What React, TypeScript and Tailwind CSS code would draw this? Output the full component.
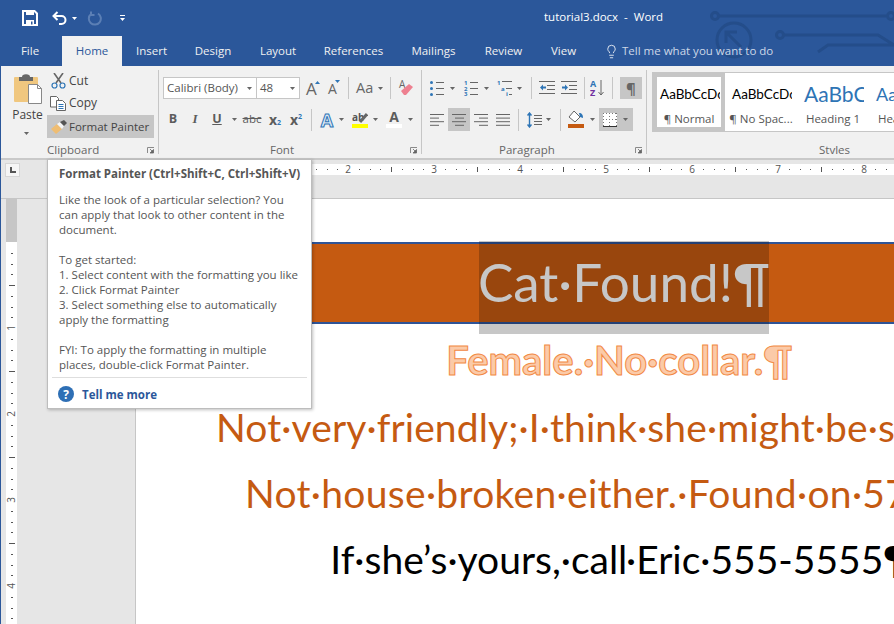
import { Lightbulb } from "lucide-react";

const tabs = [
  { label: "Insert", width: "w-[59px]" },
  { label: "Design", width: "w-[64px]" },
  { label: "Layout", width: "w-[66px]" },
  { label: "References", width: "w-[85px]" },
  { label: "Mailings", width: "w-[75px]" },
  { label: "Review", width: "w-[65px]" },
  { label: "View", width: "w-[55px]" },
];

const styleCards = [
  { sample: "AaBbCcDc", label: "¶ Normal", sampleClass: "text-[13.5px] text-black", selected: true },
  { sample: "AaBbCcDc", label: "¶ No Spac...", sampleClass: "text-[13.5px] text-black", selected: false },
  { sample: "AaBbCcDc", label: "Heading 1", sampleClass: "text-[21px] text-[#2e74b5]", selected: false },
  { sample: "AaBbCc", label: "Heading 2", sampleClass: "text-[18px] text-[#2e74b5]", selected: false },
];

function Caret({ className = "" }: { className?: string }) {
  return (
    <svg width="5" height="3" viewBox="0 0 5 3" className={`shrink-0 ${className}`}>
      <path d="M0 0h5L2.500 3z" fill="#666" />
    </svg>
  );
}

function Sep({ className = "" }: { className?: string }) {
  return <div className={`w-px h-[22px] bg-[#c6c6c6] shrink-0 ${className}`} />;
}

function Launcher() {
  return (
    <svg width="8" height="7" viewBox="0 0 8 7">
      <path d="M0.500 6V0.500H7" fill="none" stroke="#8a8a8a" />
      <path d="M3 2l3 3M6.500 2.500V6H3z" fill="#666" stroke="#666" strokeWidth="0.8" />
    </svg>
  );
}

function ListLines({ x = 6, w = 8, ys = [2, 8, 14] }: { x?: number; w?: number; ys?: number[] }) {
  return (
    <>
      {ys.map((y) => (
        <path key={y} d={`M${x} ${y + 0.5}h${w}`} stroke="#666" />
      ))}
    </>
  );
}

function AlignIcon({ rows }: { rows: [number, number][] }) {
  return (
    <svg width="15" height="12" viewBox="0 0 15 12" className="block">
      {rows.map(([x, w], i) => (
        <path key={i} d={`M${x} ${i * 3.6 + 0.5}h${w}`} stroke="#666" />
      ))}
    </svg>
  );
}

function Ruler() {
  const ticks = Array.from({ length: 71 }, (_, i) => i);
  return (
    <svg width="759" height="11" viewBox="0 0 759 11" className="block bg-white">
      {ticks.map((i) => {
        const x = 41 + i * 10.75;
        if (i % 8 === 0) {
          return (
            <text key={i} x={x} y="9" textAnchor="middle" className="fill-[#555] text-[10px]">
              {i / 8}
            </text>
          );
        }
        if (i % 4 === 0) return <rect key={i} x={Math.round(x)} y="3" width="1" height="5" fill="#555" />;
        return <rect key={i} x={Math.round(x)} y="5" width="1" height="1" fill="#555" />;
      })}
    </svg>
  );
}

function VerticalRuler() {
  const ticks = Array.from({ length: 37 }, (_, i) => i);
  return (
    <div className="w-[11px] ml-[5px]">
      <div className="h-[43px] bg-[#c6c6c6]" />
      <svg width="11" height="382" viewBox="0 0 11 382" className="block bg-white">
        {ticks.map((i) => {
          const y = i * 10.75;
          if (i % 8 === 0) {
            return (
              <text
                key={i}
                x="0"
                y="0"
                textAnchor="middle"
                transform={`translate(9 ${y}) rotate(-90)`}
                className="fill-[#555] text-[10px]"
              >
                {i === 0 ? "" : i / 8}
              </text>
            );
          }
          if (i % 4 === 0) return <rect key={i} x="3" y={Math.round(y)} width="6" height="1" fill="#555" />;
          return <rect key={i} x="5" y={Math.round(y)} width="2" height="1" fill="#555" />;
        })}
      </svg>
    </div>
  );
}

function TitleBar() {
  return (
    <header className="relative h-[66px] bg-[#2b579a] text-white overflow-hidden">
      {/* Circuit decoration in the corner */}
      <svg width="194" height="66" viewBox="0 0 194 66" className="absolute right-0 top-0" fill="none" stroke="#244d8a" strokeWidth="3">
        <circle cx="15" cy="16" r="3.500" />
        <path d="M19 16H186" />
        <circle cx="191" cy="16" r="3.500" />
        <circle cx="34" cy="40" r="17" />
        <path d="M27 33l14 14M26 43V32h11" />
        <circle cx="80" cy="35" r="3.500" />
        <path d="M84 35h94l16 10M118 52l10-7h66" />
      </svg>

      <div className="relative flex items-center h-[36px]">
        <svg width="16" height="16" viewBox="0 0 16 16" className="ml-[22px]">
          <path d="M1 1h11.500L15 3.500V15H1z" fill="none" stroke="#fff" strokeWidth="2" />
          <rect x="4" y="1" width="8" height="4" fill="#fff" />
          <rect x="4" y="10" width="8" height="5" fill="#fff" />
          <rect x="9" y="11.500" width="1.500" height="3" fill="#2b579a" />
        </svg>
        <svg width="15" height="14" viewBox="0 0 15 14" className="ml-[14px]">
          <path d="M5.500 1L1.500 5l4 4M2 5h7.500a4 4 0 0 1 0 8H7" fill="none" stroke="#fff" strokeWidth="2" />
        </svg>
        <Caret className="ml-[5px] [&>path]:fill-white" />
        <svg width="15" height="15" viewBox="0 0 15 15" className="ml-[10px]">
          <path d="M4 3a6 6 0 1 0 7-.5M4 .5V4h3.500" fill="none" stroke="#5b7fb5" strokeWidth="2" />
        </svg>
        <div className="ml-[18px] flex flex-col items-center gap-[2px]">
          <div className="w-[5px] h-px bg-white" />
          <Caret className="[&>path]:fill-white" />
        </div>
        <div className="absolute left-[544px] top-[9px] text-[11.5px] leading-[16px] whitespace-pre">tutorial3.docx  -  Word</div>
      </div>

      <nav className="relative flex h-[30px] text-[11.5px] text-[#f1f1f1]">
        <div className="w-[60px] flex items-center justify-center">File</div>
        <div className="ml-[2px] w-[60px] flex items-center justify-center bg-[#f1f1f1] text-[#2b579a]">Home</div>
        {tabs.map((tab) => (
          <div key={tab.label} className={`${tab.width} flex items-center justify-center`}>
            {tab.label}
          </div>
        ))}
        <div className="ml-[13px] flex items-center text-[#cdd8e8]">
          <Lightbulb size={15} strokeWidth={1.3} className="text-white" />
          <span className="ml-[3px]">Tell me what you want to do</span>
        </div>
      </nav>
    </header>
  );
}

function GroupLabel({ text, pad }: { text: string; pad: string }) {
  return (
    <div className={`h-[16px] -mb-[4px] flex items-center justify-between pr-[3px] text-[11.5px] text-[#666] ${pad}`}>
      <span>{text}</span>
      <Launcher />
    </div>
  );
}

function ClipboardGroup() {
  return (
    <section className="w-[158px] shrink-0 border-r border-[#c6c6c6] my-[4px] flex flex-col">
      <div className="flex flex-1">
        <div className="w-[46px] flex flex-col items-center">
          <svg width="30" height="30" viewBox="0 0 30 30" className="ml-[8px] mt-[4px]">
            <rect x="1" y="3" width="24" height="25" rx="1" fill="#f0c77f" />
            <path d="M6 7V3h3a3 2 0 0 1 8 0h3v4z" fill="#666" />
            <path d="M15.500 10.500h9l4 4v15h-13z" fill="#fff" stroke="#888" />
            <path d="M24.500 10.500v4h4" fill="none" stroke="#888" />
          </svg>
          <span className="ml-[7px] mt-[3px] text-[12px] leading-[16px] text-[#444]">Paste</span>
          <Caret className="ml-[5px] mt-[9px]" />
        </div>
        <div className="w-[107px] flex flex-col text-[12px] text-[#444]">
          <div className="h-[21px] flex items-center pl-[4px]">
            <svg width="15" height="16" viewBox="0 0 15 16">
              <path d="M3 0l7 10M12 0L5 10" stroke="#666" strokeWidth="1.600" />
              <circle cx="3.500" cy="12.500" r="2.500" fill="none" stroke="#2e75b6" strokeWidth="1.200" />
              <circle cx="11.500" cy="12.500" r="2.500" fill="none" stroke="#2e75b6" strokeWidth="1.200" />
            </svg>
            <span className="ml-[3px]">Cut</span>
          </div>
          <div className="h-[24px] flex items-center pl-[3px]">
            <svg width="16" height="15" viewBox="0 0 16 15">
              <path d="M.5.500h6l2 2V11H.500z" fill="#fff" stroke="#666" />
              <path d="M6.500 4.500h6l3 3v7h-9z" fill="#fff" stroke="#666" />
              <path d="M8.500 8.500h5M8.500 10.500h5M8.500 12.500h5" stroke="#2e75b6" />
            </svg>
            <span className="ml-[3px]">Copy</span>
          </div>
          <div className="h-[23px] flex items-center pl-[4px] bg-[#c6c6c6] text-[11.5px]">
            <svg width="16" height="14" viewBox="0 0 16 14">
              <path d="M0 9l6-5 5 5-6 5z" fill="#efbd72" />
              <path d="M6 4l3-2 4 4-2 3z" fill="#f5f5f5" />
              <path d="M9 2l4-2 3 3-3 3z" fill="#555" />
            </svg>
            <span className="ml-[2px]">Format Painter</span>
          </div>
        </div>
      </div>
      <GroupLabel text="Clipboard" pad="pl-[46px]" />
    </section>
  );
}

function FontGroup() {
  return (
    <section className="w-[263px] shrink-0 border-r border-[#c6c6c6] my-[4px] flex flex-col pl-[4px]">
      <div className="flex items-center h-[22px] mt-[7px]">
        <div className="w-[94px] h-[22px] bg-white border border-[#c6c6c6] flex items-center justify-between pl-[3px] pr-[4px] text-[11.5px] text-[#555]">
          <span>Calibri (Body)</span>
          <Caret />
        </div>
        <div className="w-[44px] h-[22px] bg-white border border-[#c6c6c6] -ml-px flex items-center justify-between pl-[3px] pr-[4px] text-[11.5px] text-[#555]">
          <span>48</span>
          <Caret />
        </div>
        <div className="relative ml-[6px] w-[14px] text-[17px] leading-none text-[#666]">
          A
          <svg width="5" height="3" viewBox="0 0 5 3" className="absolute right-0 top-[1px]"><path d="M0 3h5L2.500 0z" fill="#2e75b6" /></svg>
        </div>
        <div className="relative ml-[8px] w-[12px] text-[14px] leading-none text-[#666] mt-[2px]">
          A
          <svg width="5" height="3" viewBox="0 0 5 3" className="absolute right-0 -top-[2px]"><path d="M0 0h5L2.500 3z" fill="#2e75b6" /></svg>
        </div>
        <Sep className="ml-[8px]" />
        <span className="ml-[7px] w-[18px] text-[14.5px] text-[#666]">Aa</span>
        <Caret className="ml-[4px]" />
        <Sep className="ml-[7px]" />
        <svg width="16" height="16" viewBox="0 0 16 16" className="ml-[7px]">
          <text x="1" y="8" className="fill-[#666] text-[10px]">A</text>
          <path d="M3 11l8-7 4 3-7 8H6z" fill="#ee8090" />
        </svg>
      </div>
      <div className="flex items-center h-[23px] mt-[9px] text-[#5c5c5c]">
        <span className="w-[20px] text-center text-[12.5px] font-bold -mt-px">B</span>
        <span className="w-[24px] text-center text-[13px] italic font-['Liberation_Serif',serif] font-bold -mt-px">I</span>
        <span className="w-[20px] text-center text-[12.5px] font-bold underline -mt-px">U</span>
        <div className="w-[14px] flex justify-center"><Caret /></div>
        <span className="w-[22px] text-center text-[11.5px] line-through -mt-px">abc</span>
        <span className="w-[24px] text-center text-[14px] leading-none font-bold">
          x<span className="text-[7px] text-[#2e75b6]">2</span>
        </span>
        <span className="w-[18px] text-center text-[14px] leading-none font-bold">
          x<span className="text-[7px] text-[#2e75b6] align-[6px]">2</span>
        </span>
        <div className="w-[12px] flex justify-center"><Sep /></div>
        <div className="w-[20px] text-center text-[18px] leading-none font-bold text-[#dce8f5] [-webkit-text-stroke:1px_#2e75b6]">A</div>
        <div className="w-[8px] flex justify-center"><Caret /></div>
        <div className="ml-[7px] w-[16px] flex flex-col items-center">
          <svg width="16" height="11" viewBox="0 0 16 11" className="block">
            <text x="0" y="9" className="fill-[#555] text-[10px] font-bold">ab</text>
            <path d="M8 10l7-8" stroke="#666" strokeWidth="3" />
          </svg>
          <div className="w-[16px] h-[4px] bg-[#ffff00] mt-[1px]" />
        </div>
        <Caret className="ml-[5px]" />
        <div className="ml-[8px] w-[16px] flex flex-col items-center">
          <span className="text-[14px] leading-[12px] font-bold">A</span>
          <div className="w-[16px] h-[4px] bg-white mt-[1px]" />
        </div>
        <Caret className="ml-[6px]" />
      </div>
      <div className="flex-1" />
      <GroupLabel text="Font" pad="pl-[107px]" />
    </section>
  );
}

function ParagraphGroup() {
  return (
    <section className="w-[225px] shrink-0 border-r border-[#c6c6c6] my-[4px] flex flex-col">
      <div className="flex items-center h-[22px] mt-[7px]">
        <svg width="14" height="16" viewBox="0 0 14 16" className="ml-[8px]">
          <circle cx="1.500" cy="2.500" r="1.500" fill="#2e75b6" />
          <circle cx="1.500" cy="8.500" r="1.500" fill="#2e75b6" />
          <circle cx="1.500" cy="14.500" r="1.500" fill="#2e75b6" />
          <ListLines />
        </svg>
        <Caret className="ml-[6px]" />
        <svg width="14" height="16" viewBox="0 0 14 16" className="ml-[9px]">
          <text x="0" y="5" className="fill-[#2e75b6] text-[6px] font-bold">1</text>
          <text x="0" y="11" className="fill-[#2e75b6] text-[6px] font-bold">2</text>
          <text x="0" y="16" className="fill-[#2e75b6] text-[6px] font-bold">3</text>
          <ListLines />
        </svg>
        <Caret className="ml-[6px]" />
        <svg width="15" height="16" viewBox="0 0 15 16" className="ml-[8px]">
          <text x="0" y="5" className="fill-[#2e75b6] text-[6px] font-bold">1</text>
          <text x="4" y="11" className="fill-[#2e75b6] text-[6px] font-bold">a</text>
          <text x="9" y="16" className="fill-[#2e75b6] text-[6px] font-bold">i</text>
          <path d="M5 1.500h10M9 8.500h6M12 14.500h3" stroke="#666" />
        </svg>
        <Caret className="ml-[5px]" />
        <Sep className="ml-[9px]" />
        <svg width="16" height="14" viewBox="0 0 16 14" className="ml-[7px]">
          <path d="M0 .5h16M8 4.500h8M8 8.500h8M0 12.500h16" stroke="#666" />
          <path d="M1 6.500l3-3v2h3v2H4v2z" fill="#2e75b6" />
        </svg>
        <svg width="16" height="14" viewBox="0 0 16 14" className="ml-[6px]">
          <path d="M0 .5h16M8 4.500h8M8 8.500h8M0 12.500h16" stroke="#666" />
          <path d="M7 6.500l-3-3v2H1v2h3v2z" fill="#2e75b6" />
        </svg>
        <Sep className="ml-[7px]" />
        <svg width="15" height="18" viewBox="0 0 15 18" className="ml-[5px]">
          <text x="0" y="8" className="fill-[#2e75b6] text-[9px] font-bold">A</text>
          <text x="0" y="17" className="fill-[#7030a0] text-[9px] font-bold">Z</text>
          <path d="M11 1v15M8.500 13l2.500 3 2.500-3" fill="none" stroke="#666" />
        </svg>
        <Sep className="ml-[7px]" />
        <div className="ml-[7px] w-[22px] h-[22px] bg-[#c6c6c6] flex items-center justify-center text-[15px] font-bold text-[#666]">¶</div>
      </div>
      <div className="flex items-center h-[23px] mt-[9px]">
        <div className="ml-[8px]"><AlignIcon rows={[[0, 14], [0, 9], [0, 14], [0, 9]]} /></div>
        <div className="ml-[3px] w-[22px] h-[23px] bg-[#c6c6c6] flex items-center justify-center">
          <AlignIcon rows={[[0, 14], [3, 9], [0, 14], [3, 9]]} />
        </div>
        <div className="ml-[4px]"><AlignIcon rows={[[0, 14], [5, 9], [0, 14], [5, 9]]} /></div>
        <div className="ml-[7px]"><AlignIcon rows={[[0, 14], [0, 14], [0, 14], [0, 14]]} /></div>
        <Sep className="ml-[7px]" />
        <svg width="15" height="16" viewBox="0 0 15 16" className="ml-[8px]">
          <path d="M2.500 1v14M.5 3.500l2-2.500 2 2.500M.5 12.500l2 2.500 2-2.500" fill="none" stroke="#2e75b6" strokeWidth="1.400" />
          <path d="M7 3.500h8M7 6.500h8M7 9.500h8M7 12.500h8" stroke="#666" />
        </svg>
        <Caret className="ml-[4px]" />
        <Sep className="ml-[9px]" />
        <div className="ml-[7px] w-[16px] flex flex-col items-center">
          <svg width="16" height="12" viewBox="0 0 16 12" className="block">
            <path d="M6 0l6 6-5 5-6-5z" fill="#fff" stroke="#666" />
            <path d="M11 2c3 0 4 2 4 5l-3-1z" fill="#2e75b6" />
          </svg>
          <div className="w-[16px] h-[4px] bg-[#c55a11] mt-[1px]" />
        </div>
        <Caret className="ml-[6px]" />
        <div className="ml-[4px] w-[34px] h-[23px] bg-[#c6c6c6] flex items-center pl-[4px]">
          <svg width="14" height="14" viewBox="0 0 14 14">
            <rect width="14" height="14" fill="#fff" />
            <path d="M0 .5h14M0 6.500h14M6.500 0v14M13.500 0v14M.5 0v14" stroke="#777" strokeDasharray="1 2" />
            <path d="M0 13.500h14" stroke="#333" />
          </svg>
          <Caret className="ml-[6px]" />
        </div>
      </div>
      <div className="flex-1" />
      <GroupLabel text="Paragraph" pad="pl-[77px]" />
    </section>
  );
}

function StylesGroup() {
  return (
    <section className="flex-1 min-w-0 flex flex-col mt-[6px] mb-[4px] pl-[5px] overflow-hidden">
      <div className="flex h-[60px] w-[300px] bg-white border border-[#c6c6c6] shrink-0">
        {styleCards.map((card) => (
          <div
            key={card.label}
            className={`w-[72px] shrink-0 flex flex-col items-center overflow-hidden border-4 ${card.selected ? "border-[#c6c6c6]" : "border-white"}`}
          >
            <div className={`h-[34px] w-[62px] pl-[2px] overflow-hidden whitespace-nowrap flex items-center font-['Lato',sans-serif] ${card.sampleClass}`}>
              {card.sample}
            </div>
            <div className="text-[11.5px] leading-[16px] text-[#555] whitespace-nowrap">{card.label}</div>
          </div>
        ))}
      </div>
      <div className="h-[16px] mt-[10px] text-center text-[11.5px] leading-[16px] text-[#666] pl-[123px]">Styles</div>
    </section>
  );
}

function Tooltip() {
  return (
    <div className="absolute left-[47px] top-[159px] w-[265px] h-[250px] bg-white border border-[#bdbdbd] shadow-[1px_1px_3px_rgba(0,0,0,0.25)] text-[#555] text-[11.5px] leading-[15px]">
      <div className="px-[11px] whitespace-nowrap">
        <div className="mt-[6px] font-bold">Format Painter (Ctrl+Shift+C, Ctrl+Shift+V)</div>
        <div className="mt-[11px]">
          Like the look of a particular selection? You
          <br />
          can apply that look to other content in the
          <br />
          document.
          <br />
          <br />
          To get started:
          <br />
          1. Select content with the formatting you like
          <br />
          2. Click Format Painter
          <br />
          3. Select something else to automatically
          <br />
          apply the formatting
          <br />
          <br />
          FYI: To apply the formatting in multiple
          <br />
          places, double-click Format Painter.
        </div>
      </div>
      <div className="mx-[4px] mt-[5px] h-px bg-[#dedede]" />
      <div className="flex items-center pl-[10px] mt-[8px]">
        <div className="w-[16px] h-[16px] rounded-full bg-[#2e6fb5] text-white flex items-center justify-center text-[12px] font-bold">?</div>
        <span className="ml-[8px] font-bold text-[#2b579a]">Tell me more</span>
      </div>
    </div>
  );
}

function Doc() {
  return (
    <main className="w-[978px] shrink-0 bg-white border-l border-[#c6c6c6] font-['Lato',sans-serif] whitespace-nowrap text-center">
      <div className="mt-[43px] h-[82px] border-y-2 border-[#2f5496] bg-[#c55a11] flex justify-center">
        <div className="relative mr-[1px] w-[290px] pb-[4px] flex items-center justify-center text-white text-[53px] leading-none">
          Cat·Found!¶
          <div className="absolute left-0 right-0 -top-[3px] -bottom-[12px] bg-black/22" />
        </div>
      </div>
      <p className="mt-[14px] h-[44px] pr-[10px] text-[40px] leading-[44px] font-bold text-[#fbcaa8] [-webkit-text-stroke:1px_#f28a45]">Female.·No·collar.¶</p>
      <p className="mt-[12px] pl-[2px] text-[39px] tracking-[0.1px] leading-[66px] text-[#c55a11]">Not·very·friendly;·I·think·she·might·be·spayed.¶</p>
      <p className="pl-[23px] text-[39px] tracking-[0.3px] leading-[66px] text-[#c55a11]">Not·house·broken·either.·Found·on·57th·St.¶</p>
      <p className="pr-[8px] text-[39px] leading-[66px] text-black">If·she’s·yours,·call·Eric·555-5555¶</p>
    </main>
  );
}

export default function App() {
  return (
    <div className="relative w-[894px] h-[624px] overflow-hidden bg-[#e6e6e6] font-['Open_Sans',sans-serif]">
      <TitleBar />
      <div className="border-l border-[#2b579a]">
        {/* Ribbon */}
        <div className="flex h-[94px] bg-[#f1f1f1] border-b-2 border-[#c9c9c9]">
          <ClipboardGroup />
          <FontGroup />
          <ParagraphGroup />
          <StylesGroup />
        </div>

        {/* Ruler band */}
        <div className="flex h-[39px] border-b border-[#c6c6c6]">
          <div className="ml-[4px] mt-[3px] w-[15px] h-[14px] bg-[#f5f5f5] border border-[#d6d6d6] flex items-center justify-center">
            <div className="w-[6px] h-[6px] border-l-2 border-b-2 border-[#555]" />
          </div>
          <div className="ml-[115px] mt-[4px]">
            <Ruler />
          </div>
        </div>

        {/* Document */}
        <div className="flex">
          <div className="w-[134px] shrink-0">
            <VerticalRuler />
          </div>
          <Doc />
        </div>
      </div>
      <Tooltip />
    </div>
  );
}
